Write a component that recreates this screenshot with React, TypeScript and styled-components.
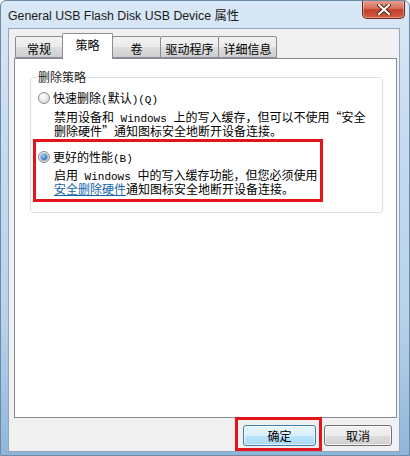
import styled, { createGlobalStyle } from 'styled-components'

const GlobalStyle = createGlobalStyle`
  html, body {
    margin: 0;
    padding: 0;
    background: #ffffff;
  }
  body {
    font-family: "Noto Sans CJK SC", "Liberation Sans", sans-serif;
    font-size: 12px;
  }
`

const Window = styled.div`
  width: 410px;
  height: 456px;
  box-sizing: border-box;
  display: flex;
  flex-direction: column;
  border: 1px solid #6d8aa5;
  border-radius: 6px 6px 0 0;
  background: linear-gradient(180deg, #d9e8f6 0%, #c6dbef 30%, #b8d2ea 70%, #8fb6d9 100%);
  overflow: hidden;
`

const TitleBar = styled.div`
  height: 27px;
  flex: none;
  display: flex;
  justify-content: space-between;
  align-items: flex-start;
  padding: 0 4px 0 7px;
`

const Title = styled.div`
  font-family: "Liberation Sans", "Noto Sans CJK SC", sans-serif;
  font-size: 12.3px;
  color: #1a1a1a;
  line-height: 14px;
  margin-top: 8px;
`

const CloseButton = styled.div`
  width: 43px;
  height: 19px;
  box-sizing: border-box;
  margin-top: -1px;
  border: 1px solid #6e2a22;
  border-top: none;
  border-radius: 0 0 5px 5px;
  background: linear-gradient(180deg, #e9a395 0%, #d9735f 45%, #c3402a 55%, #cf5f42 100%);
  display: flex;
  align-items: center;
  justify-content: center;
  box-shadow: inset 0 0 0 1px rgba(255, 255, 255, 0.35);
`

const Client = styled.div`
  flex: 1;
  margin: 0 9px 5px 7px;
  background: #f0f0f0;
  border: 1px solid #8ea7bf;
  display: flex;
  flex-direction: column;
  padding: 3px 2px 0 5px;
`

const TabStrip = styled.div`
  display: flex;
  align-items: flex-end;
  height: 26px;
  padding-left: 2px;
  position: relative;
  z-index: 1;
`

const Tab = styled.div<{ $active?: boolean; $w: number }>`
  width: ${({ $w }) => $w}px;
  box-sizing: border-box;
  height: ${({ $active }) => ($active ? 26 : 22)}px;
  margin-left: -1px;
  margin-bottom: ${({ $active }) => ($active ? -1 : 0)}px;
  border: 1px solid #898c95;
  border-bottom: ${({ $active }) => ($active ? 'none' : '1px solid #898c95')};
  border-radius: 2px 2px 0 0;
  background: ${({ $active }) =>
    $active ? '#ffffff' : 'linear-gradient(180deg, #f3f3f3 0%, #ebebeb 50%, #dddddd 51%, #cfcfcf 100%)'};
  display: flex;
  justify-content: center;
  align-items: flex-start;
  padding-top: ${({ $active }) => ($active ? 4 : 5)}px;
  line-height: 14px;
  color: #000;
  position: relative;
  z-index: ${({ $active }) => ($active ? 2 : 1)};
`

const Panel = styled.div`
  height: 360px;
  box-sizing: border-box;
  background: #ffffff;
  border: 1px solid #898c95;
  padding: 11px 13px 0 15px;
`

const GroupBox = styled.fieldset`
  margin: 0;
  padding: 7px 6px 10px 6px;
  border: 1px solid #d5dfe5;
  border-radius: 3px;
  min-width: 0;
`

const Legend = styled.legend`
  padding: 0 2px 0 1px;
  line-height: 14px;
  color: #1b1b1b;
`

const Option = styled.div<{ $boxed?: boolean }>`
  box-sizing: border-box;
  ${({ $boxed }) =>
    $boxed
      ? `
    width: 290px;
    margin: 1px 0 0 -4px;
    border: 3px solid #e3141b;
    padding: 8px 0 3px 2px;
  `
      : `
    padding: 0 0 0 1px;
  `}
`

const RadioRow = styled.div`
  display: flex;
  align-items: center;
  gap: 3px;
  height: 14px;
  line-height: 14px;
  color: #000;
`

const Radio = styled.span<{ $checked?: boolean }>`
  width: 12px;
  height: 12px;
  box-sizing: border-box;
  border-radius: 50%;
  border: 1px solid #8b8d8f;
  background: radial-gradient(circle at 40% 35%, #ffffff 0%, #e6e6e6 55%, #c9c9c9 100%);
  display: flex;
  align-items: center;
  justify-content: center;
  flex: none;

  &::after {
    content: '';
    display: ${({ $checked }) => ($checked ? 'block' : 'none')};
    width: 6px;
    height: 6px;
    border-radius: 50%;
    background: radial-gradient(circle at 40% 35%, #9fd4fb 0%, #3b84c9 55%, #1b4f8d 100%);
    box-shadow: 0 0 0 1px rgba(30, 80, 140, 0.35);
  }
`

const Description = styled.div<{ $top: number }>`
  margin: ${({ $top }) => $top}px 0 0 16px;
  color: #000;
  white-space: nowrap;
`

const Line = styled.div`
  height: 14px;
  line-height: 14px;
`

const Latin = styled.span`
  font-family: "Liberation Mono", "DejaVu Sans Mono", monospace;
  font-size: 11px;
  line-height: 0;
`

const Link = styled.span`
  color: #1565a8;
  text-decoration: underline;
`

const Footer = styled.div`
  flex: 1;
  display: flex;
  justify-content: flex-end;
  align-items: flex-start;
  padding-right: 5px;
  gap: 2px;
`

const Highlight = styled.div`
  margin-top: -1px;
  border: 3px solid #e3141b;
  padding: 5px 3px 2px 5px;
`

const Button = styled.div<{ $primary?: boolean; $w: number }>`
  width: ${({ $w }) => $w}px;
  height: 21px;
  box-sizing: border-box;
  border: 1px solid ${({ $primary }) => ($primary ? '#3c7fb1' : '#707070')};
  border-radius: 3px;
  background: ${({ $primary }) =>
    $primary
      ? 'linear-gradient(180deg, #eaf6fd 0%, #d9f0fc 50%, #bee6fd 51%, #a7d9f5 100%)'
      : 'linear-gradient(180deg, #f2f2f2 0%, #ebebeb 50%, #dddddd 51%, #cfcfcf 100%)'};
  box-shadow: inset 0 0 0 1px rgba(255, 255, 255, 0.7);
  display: flex;
  align-items: center;
  justify-content: center;
  line-height: 14px;
  color: #000;
`

const CancelSlot = styled.div`
  margin-top: 7px;
`

function CloseGlyph() {
  return (
    <svg width="14" height="11" viewBox="0 0 14 11">
      <path d="M2 1 L12 10 M12 1 L2 10" stroke="#5a1e16" strokeWidth="4" strokeLinecap="round" />
      <path d="M2 1 L12 10 M12 1 L2 10" stroke="#ffffff" strokeWidth="2.2" strokeLinecap="round" />
    </svg>
  )
}

export default function App() {
  return (
    <>
      <GlobalStyle />
      <Window>
        <TitleBar>
          <Title>General USB Flash Disk USB Device 属性</Title>
          <CloseButton>
            <CloseGlyph />
          </CloseButton>
        </TitleBar>
        <Client>
          <TabStrip>
            <Tab $w={48}>常规</Tab>
            <Tab $w={51} $active>策略</Tab>
            <Tab $w={49}>卷</Tab>
            <Tab $w={59}>驱动程序</Tab>
            <Tab $w={59}>详细信息</Tab>
          </TabStrip>
          <Panel>
            <GroupBox>
              <Legend>删除策略</Legend>
              <Option>
                <RadioRow>
                  <Radio />
                  <span>
                    快速删除<Latin>(</Latin>默认<Latin>)(Q)</Latin>
                  </span>
                </RadioRow>
                <Description $top={5}>
                  <Line>
                    禁用设备和<Latin> Windows </Latin>上的写入缓存，但可以不使用“安全
                  </Line>
                  <Line>删除硬件”通知图标安全地断开设备连接。</Line>
                </Description>
              </Option>
              <Option $boxed>
                <RadioRow>
                  <Radio $checked />
                  <span>
                    更好的性能<Latin>(B)</Latin>
                  </span>
                </RadioRow>
                <Description $top={4}>
                  <Line>
                    启用<Latin> Windows </Latin>中的写入缓存功能，但您必须使用
                  </Line>
                  <Line>
                    <Link>安全删除硬件</Link>通知图标安全地断开设备连接。
                  </Line>
                </Description>
              </Option>
            </GroupBox>
          </Panel>
          <Footer>
            <Highlight>
              <Button $primary $w={73}>确定</Button>
            </Highlight>
            <CancelSlot>
              <Button $w={68}>取消</Button>
            </CancelSlot>
          </Footer>
        </Client>
      </Window>
    </>
  )
}
